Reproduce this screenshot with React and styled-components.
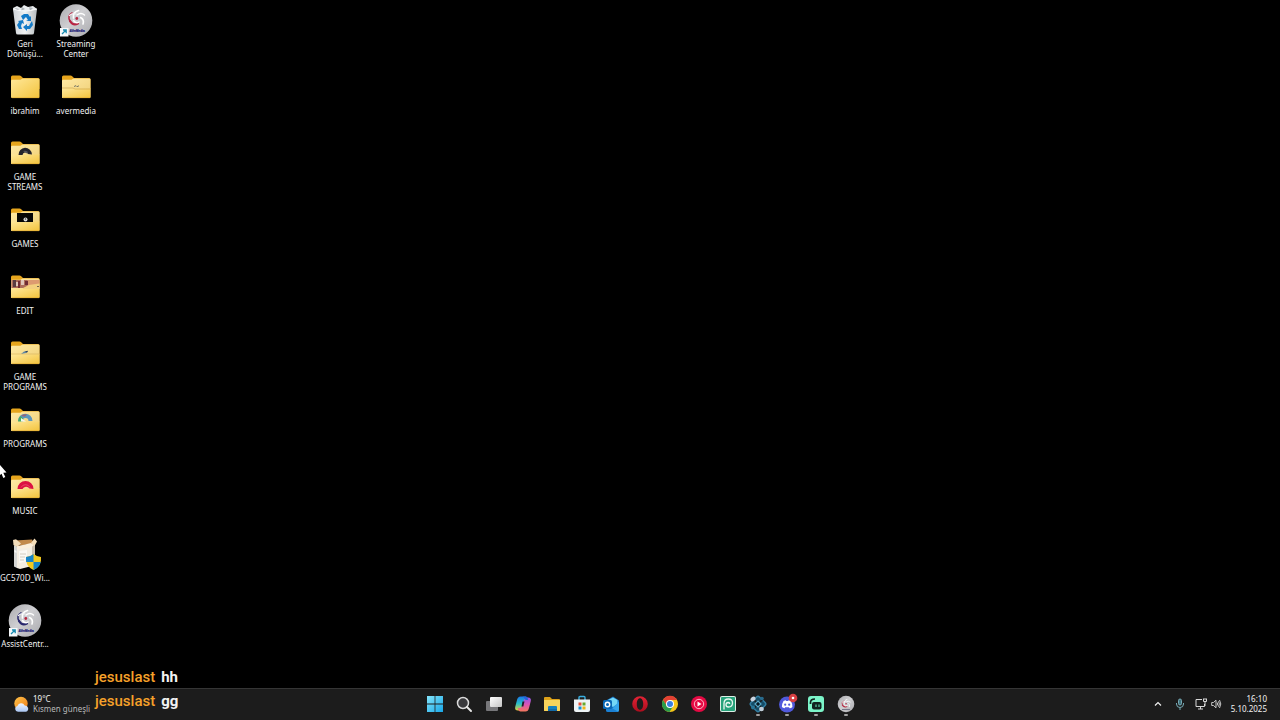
import React from "react";
import styled, { createGlobalStyle } from "styled-components";

const GlobalStyle = createGlobalStyle`
  * { box-sizing: border-box; }
  body { margin: 0; background: #000; }
  button { border: 0; padding: 0; background: none; color: inherit; font: inherit; cursor: default; }
  svg { display: block; flex: none; overflow: visible; }
`;

const Screen = styled.div`
  position: relative;
  display: flex;
  flex-direction: column;
  height: 100vh;
  overflow: hidden;
  background: #000;
  color: #f2f2f2;
  font-family: "Noto Sans", "Open Sans", sans-serif;
  font-size: 8px;
  line-height: 10px;
`;

const Desktop = styled.main`
  flex: 1;
  min-height: 0;
  display: grid;
  grid-auto-flow: column;
  grid-template-rows: repeat(10, minmax(0, 1fr));
  grid-auto-columns: 51px;
  padding-bottom: 21px;
`;

const Shortcut = styled.button`
  display: flex;
  flex-direction: column;
  align-items: center;
  gap: 3px;
  width: 50px;
  padding-top: 4px;
  line-height: 10px;
`;

const Label = styled.span`
  text-align: center;
  white-space: pre-line;
  text-shadow: 0 0 2px #000;
`;

const Taskbar = styled.footer`
  flex: none;
  display: grid;
  grid-template-columns: 1fr auto 1fr;
  align-items: center;
  height: 32px;
  padding: 0 0 1px 1px;
  border-top: 1px solid #353535;
  background: #1c1c1c;
`;

const Weather = styled.button`
  justify-self: start;
  display: flex;
  align-items: center;
  gap: 3px;
  padding-left: 12px;
  text-align: left;
`;

const Lines = styled.span`
  display: flex;
  flex-direction: column;
  line-height: 10px;
`;

const Muted = styled.span`
  color: #b8b8b8;
`;

const Apps = styled.nav`
  display: flex;
  justify-content: space-between;
  width: 429px;
`;

const AppButton = styled.button`
  position: relative;
  width: 18px;
  height: 18px;

  &::after {
    content: "";
    display: ${(p) => (p.$running ? "block" : "none")};
    position: absolute;
    left: 7px;
    bottom: -3px;
    width: 4px;
    height: 2px;
    border-radius: 1px;
    background: #a0a0a0;
  }
`;

const Tray = styled.div`
  justify-self: end;
  display: flex;
  align-items: center;
  padding-right: 13px;
`;

const TrayButton = styled.button`
  display: grid;
  place-items: center;
  width: ${(p) => p.$width}px;
  height: 20px;
`;

const Clock = styled.button`
  width: 46px;
  text-align: right;
`;

const Chat = styled.section`
  position: absolute;
  left: 95px;
  bottom: 7px;
  font: 500 15px/24px Roboto, sans-serif;
`;

const Message = styled.p`
  display: flex;
  gap: 6px;
  margin: 0;
`;

const Author = styled.span`
  color: #f5a12a;
`;

const Body = styled.span`
  font-weight: 700;
`;

const Pointer = styled.svg`
  position: absolute;
  left: 0;
  top: 465px;
`;

const HiddenDefs = styled.svg`
  position: absolute;
`;

function Defs() {
  return (
    <HiddenDefs width="0" height="0" aria-hidden="true">
      <defs>
        <linearGradient id="folder" x1="0" y1="0" x2="1" y2="1">
          <stop offset="0" stopColor="#ffe89a" />
          <stop offset="1" stopColor="#f3c33c" />
        </linearGradient>
        <linearGradient id="paper" x1="0" y1="0" x2="1" y2="1">
          <stop offset="0" stopColor="#ffeaa5" />
          <stop offset="1" stopColor="#efce74" />
        </linearGradient>
        <linearGradient id="disc" x1="0" y1="0" x2="1" y2="1">
          <stop offset="0" stopColor="#a8a8ac" />
          <stop offset=".45" stopColor="#cfcfd2" />
          <stop offset="1" stopColor="#aaaaae" />
        </linearGradient>
        <linearGradient id="bin" x1="0" y1="0" x2="1" y2="0">
          <stop offset="0" stopColor="#cfd4d8" />
          <stop offset=".5" stopColor="#f0f2f3" />
          <stop offset="1" stopColor="#b5babd" />
        </linearGradient>
        <linearGradient id="start" x1="0" y1="0" x2="1" y2="1">
          <stop offset="0" stopColor="#84e5fb" />
          <stop offset="1" stopColor="#18a7e8" />
        </linearGradient>
        <linearGradient id="sun" x1="0" y1="0" x2="1" y2="1">
          <stop offset="0" stopColor="#ffc34a" />
          <stop offset="1" stopColor="#ec7b16" />
        </linearGradient>
        <linearGradient id="cloud" x1="0" y1="0" x2="0" y2="1">
          <stop offset="0" stopColor="#eef4ff" />
          <stop offset="1" stopColor="#a9c5f2" />
        </linearGradient>
        <linearGradient id="copilotA" x1="0" y1="0" x2="0" y2="1">
          <stop offset="0" stopColor="#1b78e8" />
          <stop offset=".5" stopColor="#28bfc9" />
          <stop offset="1" stopColor="#e6cf38" />
        </linearGradient>
        <linearGradient id="copilotB" x1="0" y1="0" x2="0" y2="1">
          <stop offset="0" stopColor="#8d57ec" />
          <stop offset=".5" stopColor="#dc55b4" />
          <stop offset="1" stopColor="#f4785c" />
        </linearGradient>
        <linearGradient id="taskview" x1="0" y1="0" x2="1" y2="1">
          <stop offset="0" stopColor="#fff" />
          <stop offset="1" stopColor="#c5c5c5" />
        </linearGradient>
        <linearGradient id="opera" x1="0" y1="0" x2="0" y2="1">
          <stop offset="0" stopColor="#e32335" />
          <stop offset="1" stopColor="#a90d1d" />
        </linearGradient>
      </defs>
    </HiddenDefs>
  );
}

const peeks = {
  none: null,
  zip: (
    <>
      <path d="M2 17h11l2 1h16" stroke="#c8a04a" strokeWidth=".6" fill="none" />
      <path d="M14 15.500l2-.8 1 1 2-.9" stroke="#777766" strokeWidth="1" fill="none" />
    </>
  ),
  stream: (
    <>
      <path d="M9.500 18a7 7 0 0 1 6.500-7.200 7 7 0 0 1 7 6.700l-4-.5a3 3 0 0 0-5.500 1z" fill="#25242b" />
      <path d="M14 14a5 5 0 0 1 5 1l-1 1.500z" fill="#565660" />
    </>
  ),
  games: (
    <>
      <path d="M8 9h16v9H8z" fill="#050505" />
      <circle cx="16.500" cy="15.500" r="2" fill="#ddd" />
      <circle cx="16.500" cy="15" r=".8" fill="#444" />
    </>
  ),
  edit: (
    <>
      <path d="M2.500 9h28v8h-28z" fill="#dd9a70" />
      <path d="M2.500 9h16v8h-16z" fill="#ad6c5a" />
      <path d="M4 9h3v7H4z" fill="#5a3b41" />
      <path d="M9 10h2v7H9zM16 10h3v4h-3z" fill="#702c35" />
      <path d="M7 11h2v4H7zM12 9h3v5h-3z" fill="#dfc4b9" />
      <path d="M14 17l6-3 10.500-1.500V18H14z" fill="#f3cf7e" />
      <path d="M28 15h2v1h-2z" fill="#6e6548" />
    </>
  ),
  tools: (
    <>
      <path d="M2 17h29" stroke="#d1a84c" strokeWidth=".5" />
      <path d="M12 17l3-2.500 4-.5-2 2-3 .5z" fill="#5d85a5" />
      <path d="M16 14.500l3-.8-1 2z" fill="#293c52" />
    </>
  ),
  programs: (
    <>
      <path d="M9 17a7 7 0 0 1 14.500 0h-4a3 3 0 0 0-6 0z" fill="#5c96bc" />
      <path d="M9 17.500a7 7 0 0 1 2.500-5.500l3 3-1 2.500z" fill="#43ac65" />
      <path d="M12 12a7 7 0 0 1 6-1.500l-2 2z" fill="#9c6071" />
      <path d="M12 17.500V14l5 3.500z" fill="#f3f6ef" />
    </>
  ),
  music: (
    <>
      <path d="M8.500 18a8 8 0 0 1 16 0l-4-.5a4 4 0 0 0-7 .5z" fill="#dc1242" />
      <path d="M12 16.500a5 5 0 0 1 9 0" fill="none" stroke="#ee5d76" strokeWidth=".7" />
    </>
  ),
};

function Folder({ peek = "none" }) {
  const hasPeek = peek !== "none";
  return (
    <svg width="32" height="32" viewBox="0 0 32 32" aria-hidden="true">
      <path d="M2 6q0-1.500 1.500-1.500h7q1 0 1.700.7L14 7h15q1.500 0 1.500 1.500V18H2z" fill="#e6a51d" />
      <path d="M2 10q0-1.200 1.200-1.200h8.300l2-1.300H29.500q1 0 1 1V26q0 1-1 1H3q-1 0-1-1z" fill={hasPeek ? "url(#paper)" : "url(#folder)"} />
      {hasPeek && <path d="M2 17.500h28.500V26q0 1-1 1H3q-1 0-1-1z" fill="url(#folder)" />}
      {peeks[peek]}
      <path d="M3 26.700h27" stroke="#dda62b" strokeWidth=".6" />
    </svg>
  );
}

function Swirl() {
  return (
    <g fill="none" strokeLinecap="round">
      <path d="M10 17q-3-5 2-8" stroke="var(--swirl)" strokeWidth="1.500" />
      <path d="M10 17q3 5 8 2.500" stroke="var(--swirl)" strokeWidth="2.200" />
      <path d="M13.500 14q-1-6 5-7.500" stroke="#fff" strokeWidth="1.700" />
      <path d="M17 11q4-3 7.500 0" stroke="#fff" strokeWidth="1.500" />
      <path d="M20.500 13.500q4 2 2.500 6.500" stroke="#fff" strokeWidth="1.600" />
      <path d="M19 18q-3 2-5.500-1.500" stroke="#fff" strokeWidth="1.500" />
      <path d="M16 10q-4-1-6.500 1.500" stroke="#f4f4f7" strokeWidth="1.200" />
      <circle cx="17" cy="14.200" r="2.500" fill="#c9cbd5" />
      <circle cx="16.800" cy="14.500" r="1.400" fill="#b6283d" />
    </g>
  );
}

const SwirlTint = styled.g`
  --swirl: ${(p) => p.$tint};
`;

function AverDisc({ accent = "#28276d" }) {
  return (
    <svg width="32" height="32" viewBox="0 0 32 32" aria-hidden="true">
      <circle cx="16" cy="16.500" r="16.300" fill="url(#disc)" />
      <SwirlTint $tint={accent}><Swirl /></SwirlTint>
      <text x="17" y="28" textAnchor="middle" fontFamily="Liberation Sans, sans-serif" fontSize="3" fontWeight="700" fill="#242478" stroke="#242478" strokeWidth=".2">AVerMedia</text>
      <path d="M0 24h8.500v8.500H0z" fill="#f5f7f9" />
      <path d="M2 30l4-4M3 26h3.200v3.200" stroke="#168aaf" strokeWidth="1.300" fill="none" />
    </svg>
  );
}

function RecycleBin() {
  return (
    <svg width="32" height="32" viewBox="0 0 32 32" aria-hidden="true">
      <path d="M4 4l4-2 4 2 3-3 4 2 5-1 4 3-2 3H5z" fill="#e9ecee" />
      <path d="M6 4l4 1-2 2zM13 3l3 2-4 2zM20 3l4 1-3 3z" fill="#aeb4b8" />
      <path d="M4 5l3 24q0 1.500 2 1.500h14q2 0 2-1.500L28 5q-12 4-24 0z" fill="url(#bin)" />
      <path d="M4 5q12 4 24 0" fill="none" stroke="#fff" strokeWidth=".8" />
      <g fill="#147bc8">
        <path d="M12 12l3-2h4l2 3 1-1v5h-5l2-1-2-3-3 3z" />
        <path d="M9 17l5-1 1 4-2-1-1 3 1 3h-3l-2-4 2-3z" />
        <path d="M23 17l1 4-3 4h-3v2l-4-4 4-3v2h2l1-2z" />
      </g>
    </svg>
  );
}

function SetupBox() {
  return (
    <svg width="32" height="32" viewBox="0 0 32 32" aria-hidden="true">
      <path d="M8 8l15-2v22l-12 3-3-1z" fill="#f3ede2" />
      <path d="M23 6l3-1v22l-3 1z" fill="#cbbfae" />
      <path d="M5 7l3 1.500V30l-3-1.500z" fill="#d5d6d4" />
      <path d="M6 2.500l17-1 2 4L8 8z" fill="#c28a4c" />
      <path d="M4 2l3-.8 5 4.300L8 9 4.500 7z" fill="#f2dcba" />
      <path d="M8 8.500L22 5l3 2-3 2.500L8 11z" fill="#fbeedb" />
      <path d="M22 5l3.500-4.500L28 3.500 25.500 8z" fill="#f5dfbb" />
      <path d="M10 13l8-1v11l-8 2z" fill="#faf8f4" />
      <path d="M11 16h6M11 19h5M11 22h4" stroke="#c8c2b5" strokeWidth=".8" />
      <path d="M5.500 12l2 1v2l-2-1z" fill="#f8f8f6" />
      <path d="M24.500 16q4 3 7.500 3 1 9-7.500 13-8.500-4-7.500-13 4 0 7.500-3z" fill="#f3c91f" />
      <path d="M24.500 16v8H17.200q-.4-2-.2-5 4 0 7.500-3zM24.500 24h7.300q-1.300 5.500-7.300 8z" fill="#1784c7" />
    </svg>
  );
}

function SunCloud() {
  return (
    <svg width="17" height="17" viewBox="0 0 17 17" aria-hidden="true">
      <circle cx="8" cy="7.500" r="6.700" fill="url(#sun)" />
      <path d="M5 15.800a3 3 0 0 1-.6-5.900 4 4 0 0 1 7.300-.5 3.300 3.300 0 0 1 1.300 6.400z" fill="url(#cloud)" />
    </svg>
  );
}

const appGlyphs = {
  start: <path d="M1 1h7.600v7.600H1zM9.400 1H17v7.600H9.400zM1 9.400h7.600V17H1zM9.400 9.400H17V17H9.400z" fill="url(#start)" />,
  search: (
    <>
      <circle cx="8" cy="8" r="5.500" fill="#39393c" stroke="#dadada" strokeWidth="1.500" />
      <path d="M12 12l4 4" stroke="#e8e8e8" strokeWidth="2" strokeLinecap="round" />
    </>
  ),
  taskview: (
    <>
      <rect x="1" y="6" width="12" height="10" rx="1" fill="#77777a" />
      <rect x="5" y="2" width="12" height="10" rx="1" fill="url(#taskview)" />
    </>
  ),
  copilot: (
    <>
      <path d="M6.500 1.500h5q1.700 0 2.300 2l.4 1.500h-2q-1.700 0-2.300 2L8 13q-.7 2.500-2.700 2.500H4Q.5 15.500 1.200 12L3 5q.8-3.500 3.500-3.500z" fill="url(#copilotA)" />
      <path d="M11.500 16.500h-5q-1.700 0-2.300-2L3.800 13h2q1.700 0 2.300-2L10 5q.7-2.500 2.700-2.500H14q3.500 0 2.800 3.500L15 13q-.8 3.500-3.500 3.500z" fill="url(#copilotB)" />
      <path d="M8.500 6.500h2L9.300 11.500H7.500z" fill="#211b28" />
      <path d="M8 1.500h3.500q1.700 0 2.300 2l.4 1.500h-2q-1.500-.2-2-1.800T8 1.500z" fill="#2465d9" />
    </>
  ),
  explorer: (
    <>
      <path d="M1 3q0-1 1-1h5l2 2h7q1 0 1 1v11H1z" fill="#dda219" />
      <path d="M1 5h16v10q0 1-1 1H2q-1 0-1-1z" fill="#f8d45c" />
      <path d="M5 16v-4q0-1 1-1h7q1 0 1 1v4z" fill="#1780be" />
      <path d="M5 16v-2h9v2z" fill="#126aa8" />
    </>
  ),
  store: (
    <>
      <path d="M6 5V2.500q0-1 1-1h4q1 0 1 1V5" fill="none" stroke="#39aee0" strokeWidth="1.400" />
      <path d="M1 4.500h16V15q0 2-2 2H3q-2 0-2-2z" fill="#eef3f5" />
      <path d="M5.500 7.500h3v3h-3z" fill="#e54e36" /><path d="M9.500 7.500h3v3h-3z" fill="#66a82c" />
      <path d="M5.500 11.500h3v3h-3z" fill="#1690d0" /><path d="M9.500 11.500h3v3h-3z" fill="#efb51b" />
    </>
  ),
  outlook: (
    <>
      <path d="M4 5.500L11 1.500l6 4V15q0 2-2 2H6q-2 0-2-2z" fill="#1474c7" />
      <path d="M6 5l5-2.500L15.500 5v4L11 12 6 9z" fill="#74d7f6" />
      <path d="M17 6.500V15q0 2-2 2H7z" fill="#36a5ea" />
      <path d="M4 10l12 6.500q-.5.500-1 .5H6q-2 0-2-2z" fill="#1b80d3" />
      <rect x="1" y="5" width="9" height="9" rx="1.500" fill="#0967b5" />
      <circle cx="5.500" cy="9.500" r="2.200" fill="none" stroke="#fff" strokeWidth="1.400" />
    </>
  ),
  opera: <path fillRule="evenodd" d="M9 1.200a7.800 7.800 0 1 1 0 15.600A7.800 7.800 0 0 1 9 1.200zm0 2C7 3.200 5.800 5.700 5.800 9S7 14.800 9 14.800 12.200 12.300 12.200 9 11 3.200 9 3.200z" fill="url(#opera)" />,
  chrome: (
    <>
      <circle cx="9" cy="9" r="8" fill="#f6c519" />
      <path d="M2 5a8 8 0 0 1 14.100 0H9L6 11z" fill="#e34133" />
      <path d="M2 5a8 8 0 0 0 6.500 12l3.800-6L6 11z" fill="#2a9b4b" />
      <circle cx="9" cy="9" r="4" fill="#fff" /><circle cx="9" cy="9" r="3" fill="#397fe0" />
    </>
  ),
  music: (
    <>
      <circle cx="9" cy="9" r="8" fill="#e50943" />
      <circle cx="9" cy="9" r="4.700" fill="none" stroke="#ffc9d4" strokeWidth=".9" />
      <path d="M7.500 6.500l4 2.500-4 2.500z" fill="#fff" />
    </>
  ),
  swirl: (
    <>
      <rect x="1" y="1" width="16" height="16" rx="2" fill="#dcefe6" />
      <rect x="2" y="2" width="14" height="14" rx="1" fill="#28a27b" />
      <path d="M5 14.500V8.500Q5 4 9.300 4t4.200 4-4 4q-2.500 0-2.500-2.200T9.200 7.500q1.500 0 1.500 1.500" fill="none" stroke="#e9f7f0" strokeWidth="1.300" />
    </>
  ),
  cluster: (
    <>
      <g transform="rotate(45 9 9)">
        <rect x="3" y="3" width="12" height="12" rx="2" fill="#164c66" stroke="#327da1" strokeWidth="1.500" />
        <path d="M9 1v16M1 9h16" stroke="#1c1c1c" strokeWidth="1.500" />
      </g>
      <path d="M9 6l3 3-3 3-3-3z" fill="#081a25" stroke="#58a6c5" strokeWidth="1.200" />
      <ellipse cx="4" cy="4" rx="2.800" ry="2.200" transform="rotate(-35 4 4)" fill="#cad3df" />
      <ellipse cx="12.500" cy="14" rx="2.400" ry="2.200" fill="#c3cfda" />
      <circle cx="13" cy="3.500" r="1.800" fill="#296b8e" />
      <circle cx="4" cy="12.500" r="2" fill="#287698" />
    </>
  ),
  discord: (
    <>
      <circle cx="9" cy="9.500" r="8" fill="#5059dc" />
      <path d="M5.500 6q1.500-.8 2.300-.8l.4.8h2l.4-.8q1.500.1 2.300.8 1.800 3 1.500 6-1.300 1.200-2.800 1.200l-.6-1H7.200l-.6 1Q5 13 3.900 12q-.2-3 1.600-6z" fill="#fff" />
      <circle cx="7.200" cy="9.700" r="1.100" fill="#5059dc" /><circle cx="11.200" cy="9.700" r="1.100" fill="#5059dc" />
      <circle cx="15" cy="3" r="4.300" fill="#d73f42" /><circle cx="15" cy="3" r="1.300" fill="#fff" />
    </>
  ),
  streamlabs: (
    <>
      <rect x="1" y="1" width="16" height="16" rx="3" fill="#7cf5c9" />
      <rect x="5" y="7" width="9.500" height="7.500" rx="2" fill="#10231f" />
      <path d="M3.500 9V7.500q0-3.500 4.500-3.500" fill="none" stroke="#10231f" strokeWidth="1.700" />
      <path d="M9 9.500v2.500M12 9.500v2.500" stroke="#60dcb3" strokeWidth="1.100" />
    </>
  ),
  aver: (
    <SwirlTint $tint="#b83249">
      <circle cx="9" cy="9" r="8.300" fill="url(#disc)" />
      <g transform="translate(0 1) scale(.54)"><Swirl /></g>
      <path d="M5 14.500h8" stroke="#77778a" strokeWidth="1" />
    </SwirlTint>
  ),
};

const shortcuts = [
  ["Geri\nDönüşü...", <RecycleBin />],
  ["ibrahim", <Folder />],
  ["GAME\nSTREAMS", <Folder peek="stream" />],
  ["GAMES", <Folder peek="games" />],
  ["EDIT", <Folder peek="edit" />],
  ["GAME\nPROGRAMS", <Folder peek="tools" />],
  ["PROGRAMS", <Folder peek="programs" />],
  ["MUSIC", <Folder peek="music" />],
  ["GC570D_Wi...", <SetupBox />],
  ["AssistCentr...", <AverDisc />],
  ["Streaming\nCenter", <AverDisc accent="#b82443" />],
  ["avermedia", <Folder peek="zip" />],
];

const apps = [
  ["start", "Start"],
  ["search", "Search"],
  ["taskview", "Task view"],
  ["copilot", "Copilot"],
  ["explorer", "File Explorer"],
  ["store", "Microsoft Store"],
  ["outlook", "Outlook"],
  ["opera", "Opera"],
  ["chrome", "Chrome"],
  ["music", "YouTube Music"],
  ["swirl", "Playnite"],
  ["cluster", "Cluster", true],
  ["discord", "Discord", true],
  ["streamlabs", "Streamlabs", true],
  ["aver", "Streaming Center", true],
];

const messages = [
  ["jesuslast", "hh"],
  ["jesuslast", "gg"],
];

export default function App() {
  return (
    <Screen>
      <GlobalStyle />
      <Defs />
      <Desktop>
        {shortcuts.map(([name, icon]) => (
          <Shortcut key={name} type="button">
            {icon}
            <Label>{name}</Label>
          </Shortcut>
        ))}
      </Desktop>

      <Taskbar>
        <Weather type="button">
          <SunCloud />
          <Lines>
            <span>19°C</span>
            <Muted>Kısmen güneşli</Muted>
          </Lines>
        </Weather>
        <Apps>
          {apps.map(([glyph, name, running]) => (
            <AppButton key={glyph} type="button" aria-label={name} $running={running}>
              <svg width="18" height="18" viewBox="0 0 18 18" aria-hidden="true">{appGlyphs[glyph]}</svg>
            </AppButton>
          ))}
        </Apps>
        <Tray>
          <TrayButton type="button" $width={22} aria-label="Hidden icons">
            <svg width="8" height="6" viewBox="0 0 8 6" fill="none" stroke="#f0f0f0" strokeWidth="1.200"><path d="M1 4.500l3-3 3 3" /></svg>
          </TrayButton>
          <TrayButton type="button" $width={21} aria-label="Microphone">
            <svg width="8" height="12" viewBox="0 0 8 12" fill="none" stroke="#77aab5" strokeWidth="1">
              <rect x="2.500" y="1" width="3" height="6" rx="1.500" fill="#41717c" />
              <path d="M.5 5v1a3.500 3.500 0 0 0 7 0V5M4 9.500V12" />
            </svg>
          </TrayButton>
          <TrayButton type="button" $width={21} aria-label="Network">
            <svg width="12" height="12" viewBox="0 0 12 12" fill="none" stroke="#d8d8d8" strokeWidth="1">
              <path d="M7 1.500H1v7h8.500V6M3 11h5M5.500 8.500V11" />
              <path d="M8.500 1v2.500h3V1M10 3.500V8M8 1h4" />
            </svg>
          </TrayButton>
          <TrayButton type="button" $width={10} aria-label="Volume">
            <svg width="10" height="10" viewBox="0 0 10 10" fill="none" stroke="#d8d8d8" strokeWidth=".9">
              <path d="M.7 3.500h1.800L5 1.200v7.600L2.500 6.500H.7zM6.200 3.500q1 1.500 0 3M7.400 2.300q2 2.700 0 5.400M8.500 1q2.600 4 0 8" />
            </svg>
          </TrayButton>
          <Clock type="button">
            <Lines>
              <span>16:10</span>
              <span>5.10.2025</span>
            </Lines>
          </Clock>
        </Tray>
      </Taskbar>

      <Chat aria-label="Chat">
        {messages.map(([author, text]) => (
          <Message key={text}>
            <Author>{author}</Author>
            <Body>{text}</Body>
          </Message>
        ))}
      </Chat>

      <Pointer width="7" height="14" viewBox="0 0 7 14" aria-hidden="true">
        <path d="M0 0l6.500 7.500-3.200.3 2 4.200-2 1-1.800-4.200L0 10z" fill="#fff" />
      </Pointer>
    </Screen>
  );
}
